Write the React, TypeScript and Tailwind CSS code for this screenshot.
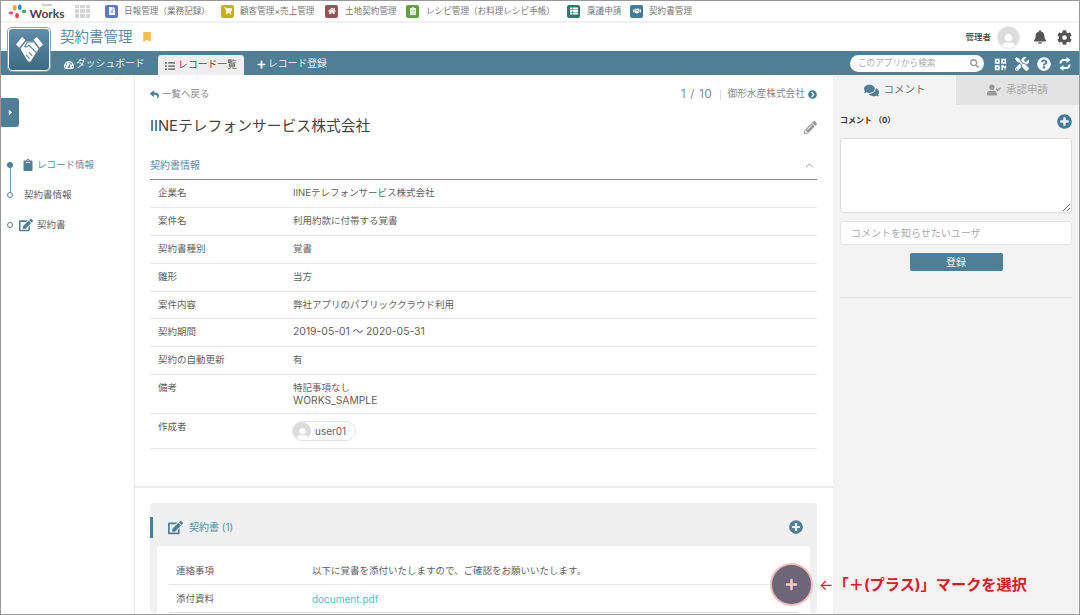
import type { ReactNode } from 'react';
import {
  FaBell, FaBookmark, FaCaretRight, FaChevronCircleRight, FaClipboard, FaClipboardList, FaCog, FaComments,
  FaEdit, FaFileAlt, FaHandshake, FaHome, FaListUl, FaPencilAlt, FaPlus, FaPlusCircle, FaQrcode,
  FaQuestionCircle, FaReply, FaSearch, FaShoppingCart, FaTachometerAlt, FaThList, FaTools, FaUser, FaUserCheck,
} from 'react-icons/fa';
import { ChevronUp } from 'lucide-react';

const apps: { name: string; bg: string; icon: ReactNode; iconGap: string; next: string; textW: string }[] = [
  { name: '日報管理（業務記録）', bg: 'bg-[#5b78d0]', icon: <FaFileAlt />, iconGap: 'ml-[6px]', next: 'mr-[11px]', textW: 'w-[86px]' },
  { name: '顧客管理×売上管理', bg: 'bg-[#c4b400]', icon: <FaShoppingCart />, iconGap: 'ml-[6px]', next: 'mr-[7px]', textW: 'w-[78px]' },
  { name: '土地契約管理', bg: 'bg-[#9c4f55]', icon: <FaHome />, iconGap: 'ml-[7px]', next: 'mr-[8px]', textW: 'w-[53px]' },
  { name: 'レシピ管理（お料理レシピ手帳）', bg: 'bg-[#62a23e]', icon: <FaClipboardList />, iconGap: 'ml-[7px]', next: 'mr-[11px]', textW: 'w-[130px]' },
  { name: '稟議申請', bg: 'bg-[#2f7a70]', icon: <FaThList />, iconGap: 'ml-[7px]', next: 'mr-[7px]', textW: 'w-[36px]' },
  { name: '契約書管理', bg: 'bg-[#3f7d9c]', icon: <FaHandshake />, iconGap: 'ml-[6px]', next: '', textW: 'w-[45px]' },
];

const fields: { label: string; value: ReactNode; h: string }[] = [
  { label: '企業名', value: 'IINEテレフォンサービス株式会社', h: 'h-[28px]' },
  { label: '案件名', value: '利用約款に付帯する覚書', h: 'h-[28px]' },
  { label: '契約書種別', value: '覚書', h: 'h-[28px]' },
  { label: '雛形', value: '当方', h: 'h-[28px]' },
  { label: '案件内容', value: '弊社アプリのパブリッククラウド利用', h: 'h-[27px]' },
  { label: '契約期間', value: <span className="text-[10.4px]">2019-05-01 ～ 2020-05-31</span>, h: 'h-[28px]' },
  { label: '契約の自動更新', value: '有', h: 'h-[28px]' },
  {
    label: '備考',
    value: (
      <>
        特記事項なし
        <br />
        <span className="text-[10.3px]">WORKS_SAMPLE</span>
      </>
    ),
    h: 'h-[39px]',
  },
];

function Avatar({ size, icon }: { size: string; icon: string }) {
  return (
    <span className={`flex items-end justify-center overflow-hidden rounded-full bg-[#dcdcdc] ${size}`}>
      <FaUser className={`text-white ${icon}`} />
    </span>
  );
}

function Row({ label, children, h }: { label: string; children: ReactNode; h: string }) {
  return (
    <div className={`flex items-start border-b border-[#e6e6e6] pt-[7px] ${h}`}>
      <div className="w-[143px] pl-[8px] leading-[12px]">{label}</div>
      <div className="leading-[12px]">{children}</div>
    </div>
  );
}

function HandshakeLogo() {
  return (
    <svg viewBox="0 0 80 77" className="h-[26px] w-[27px]">
      <polygon points="0,22 18,0 28,8 10,32" fill="#fff" />
      <polygon points="80,22 62,0 52,8 70,32" fill="#fff" />
      <polygon points="13,35 30,13 50,13 67,35 42,74 35,72" fill="#fff" />
      <path d="M50 15 L34 15 L26 28 Q32 32 38 24 L60 46 M48 56 L38 45 M40 64 L30 53" fill="none" stroke="#4f7f97" strokeWidth="3" />
    </svg>
  );
}

export default function App() {
  return (
    <div className="relative flex h-[615px] w-[1080px] flex-col overflow-hidden border border-[#999] bg-white font-['Inter','Noto_Sans_CJK_JP',sans-serif] text-[9.5px] text-[#5f5f5f]">
      {/* app launcher */}
      <div className="flex h-[22px] shrink-0 items-center border-b-2 border-[#f2f2f2] pl-[7px] text-[8.6px] text-[#777]">
        <svg viewBox="0 0 20 16" className="h-[15px] w-[19px] shrink-0">
          <ellipse cx="3" cy="9.5" rx="2.6" ry="1.8" fill="#ee4f9c" />
          <ellipse cx="7" cy="4" rx="2" ry="3" fill="#f3a21f" />
          <ellipse cx="12.5" cy="3.5" rx="2" ry="3" fill="#2f8fd8" />
          <ellipse cx="17" cy="8" rx="2.6" ry="1.8" fill="#37b36a" />
          <ellipse cx="9.5" cy="12.5" rx="2" ry="2.8" fill="#e8413e" />
        </svg>
        <div className="ml-[3px] flex w-[34px] flex-col items-center font-['Lato',sans-serif] text-[#444]">
          <span className="h-[4px] text-[3.5px] leading-[4px] text-[#888]">Saaske</span>
          <span className="text-[12px] leading-[13px] font-bold">Works</span>
        </div>
        <div className="ml-[11px] grid h-[13px] w-[15px] grid-cols-3 gap-[1px]">
          {Array.from({ length: 9 }).map((_, i) => (
            <span key={i} className="bg-[#d4d4d4]" />
          ))}
        </div>
        <div className="ml-[15px] flex items-center">
          {apps.map((a) => (
            <div key={a.name} className={`flex items-center ${a.next}`}>
              <span className={`flex h-[13px] w-[13px] items-center justify-center rounded-[2px] text-[8px] text-white ${a.bg}`}>
                {a.icon}
              </span>
              <span className={`${a.iconGap} whitespace-nowrap ${a.textW}`}>{a.name}</span>
            </div>
          ))}
        </div>
      </div>

      {/* app title */}
      <div className="flex h-[28px] shrink-0 items-center pr-[7px] pl-[59px]">
        <span className="text-[14.5px] leading-none text-[#5a8ea8]">契約書管理</span>
        <FaBookmark className="ml-[9px] text-[10px] text-[#f6bd45]" />
        <span className="ml-auto text-[8.5px] font-medium text-[#444]">管理者</span>
        <span className="mt-[1px] ml-[6px] rounded-full border border-[#e4e4e4]">
          <Avatar size="h-[21px] w-[21px]" icon="text-[15px] -mb-[1px]" />
        </span>
        <FaBell className="ml-[13px] text-[14px] text-[#555]" />
        <FaCog className="ml-[10px] text-[15px] text-[#555]" />
      </div>

      {/* teal bar */}
      <div className="flex h-[24px] shrink-0 items-end bg-[#4f7f97] pl-[63px] text-[9.8px] text-white">
        <div className="mb-[3px] flex w-[94px] items-center gap-[2px] text-[#e9eff2]">
          <FaTachometerAlt className="text-[10px]" />
          ダッシュボード
        </div>
        <div className="flex h-[20px] w-[86px] items-center justify-center gap-[3px] rounded-t-[3px] bg-[#eeeeee] pt-[1px] text-[#555]">
          <FaListUl className="text-[10px]" />
          レコード一覧
        </div>
        <div className="mb-[3px] ml-[13px] flex items-center gap-[2px] text-[#e9eff2]">
          <FaPlus className="text-[9px] text-white" />
          レコード登録
        </div>
        <div className="mb-[3px] ml-auto flex h-[17px] w-[134px] items-center justify-between rounded-full bg-white pr-[5px] pl-[8px] text-[8.6px] text-[#aaa]">
          このアプリから検索
          <FaSearch className="text-[9px] text-[#999]" />
        </div>
        <div className="mb-[4px] ml-[10px] flex items-center pr-[8px] text-white">
          <FaQrcode className="text-[13px]" />
          <FaTools className="ml-[8px] text-[14px]" />
          <FaQuestionCircle className="ml-[8px] text-[14px]" />
          <svg viewBox="0 0 12 14" className="ml-[8px] h-[14px] w-[12px]" fill="none" stroke="currentColor" strokeWidth="2">
            <path d="M1.5 6.5 Q1.5 3 5 3 H8" />
            <path d="M10.5 7.5 Q10.5 11 7 11 H4" />
            <path d="M7.5 0 L11.5 3 L7.5 6 Z" fill="currentColor" stroke="none" />
            <path d="M4.5 8 L0.5 11 L4.5 14 Z" fill="currentColor" stroke="none" />
          </svg>
        </div>
      </div>

      {/* body */}
      <div className="flex min-h-0 flex-1">
        <aside className="w-[134px] shrink-0 border-r border-[#e8e8e8]">
          <div className="mt-[23px] flex h-[29px] w-[18px] items-center justify-center rounded-r-[3px] bg-[#4f7f97] text-[9px] text-white">
            <FaCaretRight />
          </div>
          <div className="mt-[23px] flex pl-[6px]">
            <div className="flex w-[6px] flex-col items-center pt-[12px]">
              <span className="h-[6px] w-[6px] rounded-full bg-[#4f7f97]" />
              <span className="h-[24px] w-px bg-[#6c9ab0]" />
              <span className="h-[6px] w-[6px] rounded-full border border-[#4f7f97]" />
              <span className="h-[24px]" />
              <span className="h-[6px] w-[6px] rounded-full border border-[#4f7f97]" />
            </div>
            <div className="flex flex-col">
              <div className="ml-[9px] flex h-[30px] items-center gap-[3px] text-[#5a8ea8]">
                <FaClipboard className="text-[12px] text-[#4f7f97]" />
                レコード情報
              </div>
              <div className="ml-[11px] flex h-[30px] items-center">契約書情報</div>
              <div className="ml-[6px] flex h-[30px] items-center gap-[4px]">
                <FaEdit className="text-[14px] text-[#4f7f97]" />
                契約書
              </div>
            </div>
          </div>
        </aside>

        <main className="min-w-0 flex-1">
          <div className="border-b-2 border-[#ececec] pr-[16px] pb-[37px] pl-[15px]">
            <div className="flex h-[38px] items-center pt-[1px] text-[#888]">
              <FaReply className="text-[9px] text-[#4f7f97]" />
              <span className="ml-[3px]">一覧へ戻る</span>
              <span className="ml-auto text-[11.5px] tracking-[0.7px] text-[#888]">1 / 10</span>
              <span className="mx-[7px] h-[10px] w-px bg-[#ddd]" />
              <span className="text-[9.7px]">御形水産株式会社</span>
              <FaChevronCircleRight className="ml-[3px] text-[9px] text-[#3f7d9c]" />
            </div>
            <div className="flex h-[28px] items-center justify-between">
              <span className="mb-[2px] text-[14.8px] text-[#444]">IINEテレフォンサービス株式会社</span>
              <FaPencilAlt className="text-[13px] text-[#999]" />
            </div>
            <div className="mt-[13px] flex h-[26px] items-center justify-between border-b border-[#888] pb-[3px] text-[10px] text-[#5a8ea8]">
              契約書情報
              <ChevronUp size={13} strokeWidth={1.4} className="mr-[1px] text-[#777]" />
            </div>
            {fields.map((f) => (
              <Row key={f.label} label={f.label} h={f.h}>
                {f.value}
              </Row>
            ))}
            <div className="flex h-[35px] items-start border-b border-[#e6e6e6] pt-[7px]">
              <div className="w-[142px] pl-[8px] leading-[12px]">作成者</div>
              <div className="flex h-[20px] w-[64px] items-center gap-[4px] rounded-full border border-[#e4e4e4]">
                <Avatar size="h-[18px] w-[18px]" icon="text-[13px] -mb-[1px]" />
                <span className="text-[10px]">user01</span>
              </div>
            </div>
          </div>

          <div className="mt-[15px] mr-[16px] ml-[15px] rounded-[3px] bg-[#f0f0f0] px-[7px] pt-[14px]">
            <div className="relative flex h-[29px] items-start justify-between text-[#5a8ea8]">
              <span className="absolute top-0 -left-[7px] h-[21px] w-[3px] bg-[#4f7f97]" />
              <span className="ml-[11px] flex items-center gap-[6px] text-[10px] leading-[20px]">
                <FaEdit className="text-[15px] text-[#4f7f97]" />
                契約書 (1)
              </span>
              <FaPlusCircle className="mt-[3px] mr-[7px] text-[14px] text-[#4f7f97]" />
            </div>
            <div className="rounded-t-[3px] bg-white px-[12px] pt-[11px]">
              <div className="flex h-[28px] items-center border-b border-[#e6e6e6] pt-[2px] pl-[7px]">
                <span className="w-[136px]">連絡事項</span>
                以下に覚書を添付いたしますので、ご確認をお願いいたします。
              </div>
              <div className="flex h-[28px] items-center border-b border-[#ddd] pt-[2px] pl-[7px]">
                <span className="w-[136px]">添付資料</span>
                <span className="text-[10px] text-[#45c6c9]">document.pdf</span>
              </div>
            </div>
          </div>
        </main>

        <aside className="w-[246px] shrink-0 bg-[#f3f3f3]">
          <div className="flex h-[30px] text-[10.5px]">
            <div className="flex w-[123px] items-center justify-center gap-[5px] text-[#777]">
              <FaComments className="text-[15px] text-[#4f7f97]" />
              コメント
            </div>
            <div className="flex flex-1 items-center justify-center gap-[5px] bg-[#e3e3e3] text-[#aaa]">
              <FaUserCheck className="text-[14px] text-[#999]" />
              承認申請
            </div>
          </div>
          <div className="px-[7px]">
            <div className="flex h-[33px] items-center justify-between">
              <span className="-mt-[3px] text-[8px] font-bold text-[#333]">コメント （0）</span>
              <FaPlusCircle className="text-[15px] text-[#3f7d9c]" />
            </div>
            <textarea
              aria-label="コメント"
              className="block h-[75px] w-full rounded-[3px] border border-[#ddd] bg-white"
            />
            <input
              placeholder="コメントを知らせたいユーザ"
              className="mt-[8px] block h-[24px] w-full rounded-[3px] border border-[#e4e4e4] bg-white px-[10px] text-[10px] placeholder:text-[#aaa]"
            />
            <div className="mt-[8px] flex justify-center">
              <button className="h-[18px] w-[93px] rounded-[2px] bg-[#4f7f97] text-[10px] text-[#e9eff2]">登録</button>
            </div>
            <div className="mt-[26px] border-t border-[#e2e2e2]" />
          </div>
        </aside>
      </div>

      {/* logo sits across the title row and the teal bar */}
      <div className="absolute top-[27px] left-[7px] flex h-[43px] w-[42px] items-center justify-center rounded-[4px] border border-white bg-gradient-to-b from-[#5f8ea6] to-[#3f6b82] shadow-[0_0_0_1px_#7fa3b6]">
        <HandshakeLogo />
      </div>

      {/* callout over the page */}
      <div className="absolute top-[564px] left-[771px] flex h-[39px] w-[39px] items-center justify-center rounded-full bg-[#6f6578] text-[13px] text-[#f5c9c9] ring-2 ring-[#f3bcbc]">
        <FaPlus />
      </div>
      <div className="absolute top-[574px] left-[818px] whitespace-nowrap text-[15.2px] leading-[20px] font-bold text-[#f0131e]">
        <span className="font-normal">←</span>「＋(プラス)」マークを選択
      </div>
    </div>
  );
}
